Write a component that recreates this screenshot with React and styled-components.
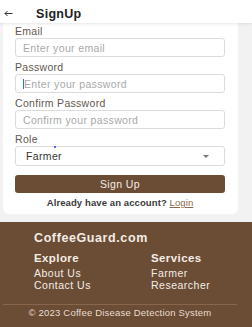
import styled, { createGlobalStyle } from "styled-components";

const GlobalStyle = createGlobalStyle`
  html, body {
    margin: 0;
    padding: 0;
    background: #f2f2f2;
    font-family: "Liberation Sans", Arial, sans-serif;
  }
  * { box-sizing: border-box; }
`;

const Page = styled.div`
  width: 252px;
  height: 327px;
  overflow: hidden;
  background: #f2f2f2;
  display: flex;
  flex-direction: column;
`;

const Header = styled.header`
  height: 23px;
  flex: none;
  background: #ffffff;
  display: flex;
  align-items: center;
  padding: 4px 0 0 4px;
  box-shadow: 0 1px 3px rgba(0, 0, 0, 0.1);
  position: relative;
  z-index: 2;
`;

const Title = styled.h1`
  margin: 0 0 0 23px;
  font-size: 12.5px;
  font-weight: 700;
  color: #222;
  letter-spacing: 0.3px;
`;

const Card = styled.form`
  width: 235px;
  margin-left: 3px;
  background: #ffffff;
  border-radius: 0 0 6px 6px;
  padding: 2px 13px 5px 12px;
  display: flex;
  flex-direction: column;
`;

const Field = styled.div`
  display: flex;
  flex-direction: column;
  margin-bottom: ${(p) => (p.$last ? "9px" : "4px")};
`;

const Label = styled.label`
  font-size: 10.5px;
  line-height: 12px;
  color: #62574e;
  letter-spacing: 0.3px;
  margin-bottom: 1px;
`;

const Input = styled.div`
  height: ${(p) => (p.$tall ? "20px" : "19px")};
  border: 1px solid #dcdcdc;
  border-radius: 3px;
  display: flex;
  align-items: center;
  padding: 0 7px;
  font-size: 10.5px;
  letter-spacing: 0.35px;
  color: ${(p) => (p.$value ? "#333" : "#a9a9a9")};
  position: relative;
`;

const Caret = styled.span`
  width: 1px;
  height: 10px;
  background: #2f6fd6;
`;

const Dot = styled.span`
  position: absolute;
  left: 38px;
  top: -1px;
  width: 2px;
  height: 2px;
  border-radius: 50%;
  background: #2a3cff;
`;

const SelectValue = styled.span`
  padding-left: 3px;
  flex: 1;
  color: #333;
`;

const Chevron = styled.span`
  width: 0;
  height: 0;
  border-left: 3px solid transparent;
  border-right: 3px solid transparent;
  border-top: 3px solid #777;
  margin-right: 8px;
`;

const Button = styled.button`
  height: 18px;
  border: none;
  border-radius: 3px;
  background: #6b4c35;
  color: #f3ece6;
  font-family: inherit;
  font-size: 10.5px;
  letter-spacing: 0.4px;
  padding: 0;
`;

const Footnote = styled.p`
  margin: 4px 0 0;
  line-height: 12px;
  text-align: center;
  font-size: 9.5px;
  font-weight: 700;
  color: #3a3a3a;
  letter-spacing: 0.1px;
  a {
    color: #8a6a4f;
    text-decoration: underline;
    font-weight: 400;
  }
`;

const Footer = styled.footer`
  flex: 1;
  margin-top: 8px;
  background: #6b4c35;
  color: #f4ede6;
  padding: 8px 15px 0 3px;
`;

const Brand = styled.div`
  font-size: 12.5px;
  font-weight: 700;
  line-height: 16px;
  letter-spacing: 0.6px;
  padding-left: 31px;
`;

const Columns = styled.div`
  display: grid;
  grid-template-columns: 117px 1fr;
  padding-left: 31px;
  margin-top: 5px;
`;

const ColTitle = styled.div`
  font-size: 11.5px;
  font-weight: 700;
  line-height: 15px;
  letter-spacing: 0.4px;
  margin-bottom: 1px;
`;

const ColLink = styled.div`
  font-size: 10.5px;
  line-height: 12px;
  letter-spacing: 0.5px;
`;

const Divider = styled.hr`
  border: none;
  border-top: 1px solid #86674e;
  margin: 13px 0 0;
`;

const Copyright = styled.div`
  font-size: 9.5px;
  line-height: 16px;
  text-align: center;
  letter-spacing: 0.2px;
  color: #e9ddd2;
`;

export default function App() {
  return (
    <>
      <GlobalStyle />
      <Page>
        <Header>
          <svg width="9" height="7" viewBox="0 0 9 7">
            <path d="M8.5 3.5H1M3.5 1L1 3.5L3.5 6" fill="none" stroke="#333" strokeWidth="1" />
          </svg>
          <Title>SignUp</Title>
        </Header>
        <Card>
          <Field>
            <Label>Email</Label>
            <Input>Enter your email</Input>
          </Field>
          <Field>
            <Label>Password</Label>
            <Input>
              <Caret />
              Enter your password
            </Input>
          </Field>
          <Field>
            <Label>Confirm Password</Label>
            <Input>Confirm your password</Input>
          </Field>
          <Field $last>
            <Label>Role</Label>
            <Input $tall $value>
              <Dot />
              <SelectValue>Farmer</SelectValue>
              <Chevron />
            </Input>
          </Field>
          <Button type="button">Sign Up</Button>
          <Footnote>
            Already have an account? <a>Login</a>
          </Footnote>
        </Card>
        <Footer>
          <Brand>CoffeeGuard.com</Brand>
          <Columns>
            <div>
              <ColTitle>Explore</ColTitle>
              <ColLink>About Us</ColLink>
              <ColLink>Contact Us</ColLink>
            </div>
            <div>
              <ColTitle>Services</ColTitle>
              <ColLink>Farmer</ColLink>
              <ColLink>Researcher</ColLink>
            </div>
          </Columns>
          <Divider />
          <Copyright>© 2023 Coffee Disease Detection System</Copyright>
        </Footer>
      </Page>
    </>
  );
}
